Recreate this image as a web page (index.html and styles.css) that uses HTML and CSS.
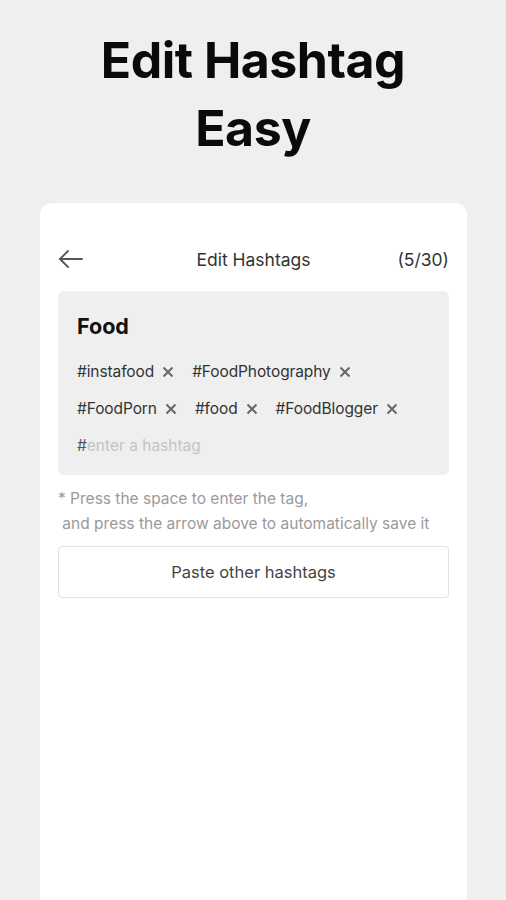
FILE: index.html
```html
<!DOCTYPE html>
<html lang="en">
<head>
  <meta charset="UTF-8" />
  <meta name="viewport" content="width=device-width, initial-scale=1.0">
  <title>Edit Hashtag Easy</title>
  <link rel="stylesheet" href="styles.css">
</head>
<body>
  <header class="promo">
    <h1>Edit Hashtag<br>Easy</h1>
  </header>

  <div class="phone-card">
    <div class="top-bar">
      <button class="back-btn" aria-label="Back">
        <svg width="26" height="20" viewBox="0 0 26 20" fill="none" stroke="#555" stroke-width="1.8" stroke-linecap="round" stroke-linejoin="round">
          <path d="M24 10H2" />
          <path d="M10 2L2 10L10 18" />
        </svg>
      </button>
      <div class="top-title">Edit Hashtags</div>
      <div class="counter">(5/30)</div>
    </div>

    <div class="tag-box">
      <div class="group-name">Food</div>
      <div class="tags">
        <span class="tag">#instafood<svg class="remove" viewBox="0 0 12 12"><path d="M1.5 1.5L10.5 10.5M10.5 1.5L1.5 10.5" /></svg></span>
        <span class="tag">#FoodPhotography<svg class="remove" viewBox="0 0 12 12"><path d="M1.5 1.5L10.5 10.5M10.5 1.5L1.5 10.5" /></svg></span>
        <span class="tag">#FoodPorn<svg class="remove" viewBox="0 0 12 12"><path d="M1.5 1.5L10.5 10.5M10.5 1.5L1.5 10.5" /></svg></span>
        <span class="tag">#food<svg class="remove" viewBox="0 0 12 12"><path d="M1.5 1.5L10.5 10.5M10.5 1.5L1.5 10.5" /></svg></span>
        <span class="tag">#FoodBlogger<svg class="remove" viewBox="0 0 12 12"><path d="M1.5 1.5L10.5 10.5M10.5 1.5L1.5 10.5" /></svg></span>
      </div>
      <div class="tag-input">#<span class="placeholder">enter a hashtag</span></div>
    </div>

    <p class="hint">* Press the space to enter the tag,<br>&nbsp;and press the arrow above to automatically save it</p>

    <button class="paste-btn">Paste other hashtags</button>
  </div>
</body>
</html>
```

FILE: styles.css
```css
body {
  margin: 0;
  background: #efefef;
  font-family: Inter, 'Noto Sans', sans-serif;
  color: #222;
  height: 900px;
  overflow: hidden;
}

.promo {
  padding-top: 26px;
  height: 173px;
  box-sizing: border-box;
  text-align: center;
}

.promo h1 {
  margin: 0;
  font-size: 50px;
  line-height: 68px;
  font-weight: 700;
  color: #0a0a0a;
  letter-spacing: -0.5px;
}

.phone-card {
  background: #fff;
  margin: 30px 39px 0 40px;
  border-radius: 12px 12px 0 0;
  padding: 36px 18px 0 18px;
  min-height: 700px;
}

.top-bar {
  display: flex;
  align-items: center;
  height: 40px;
}

.back-btn {
  background: none;
  border: none;
  padding: 0;
  width: 60px;
  display: flex;
  align-items: center;
  cursor: pointer;
}

.top-title {
  flex: 1;
  text-align: center;
  font-size: 17.5px;
  color: #333;
}

.counter {
  width: 60px;
  text-align: right;
  font-size: 17.5px;
  color: #333;
}

.tag-box {
  background: #efefef;
  border-radius: 6px;
  margin-top: 12px;
  padding: 20px 19px 11px;
}

.group-name {
  font-size: 21.5px;
  font-weight: 700;
  color: #111;
  line-height: 30px;
}

.tags {
  display: flex;
  flex-wrap: wrap;
  column-gap: 18px;
  margin-top: 12px;
}

.tag {
  display: flex;
  align-items: center;
  font-size: 15.5px;
  color: #333;
  height: 37px;
  letter-spacing: -0.1px;
}

.remove {
  width: 12px;
  height: 12px;
  margin-left: 8px;
  fill: none;
  stroke: #666;
  stroke-width: 2;
}

.tag-input {
  font-size: 15.5px;
  color: #555;
  line-height: 37px;
}

.placeholder {
  color: #c4c4c4;
}

.hint {
  margin: 11px 0 0;
  font-size: 15.5px;
  line-height: 25px;
  color: #9a9a9a;
}

.paste-btn {
  display: block;
  width: 100%;
  margin-top: 10px;
  height: 52px;
  background: #fff;
  border: 1px solid #e2e2e2;
  border-radius: 4px;
  font-family: inherit;
  font-size: 16.5px;
  color: #444;
  cursor: pointer;
}
```
